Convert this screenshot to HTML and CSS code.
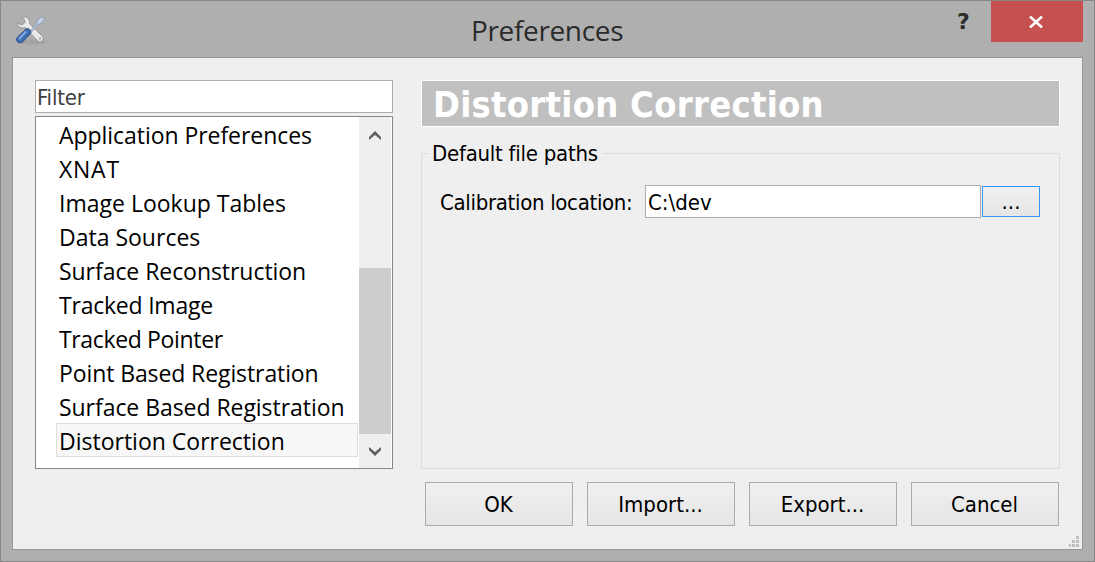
FILE: index.html
```html
<!DOCTYPE html>
<html lang="en">
<head>
<meta charset="utf-8">
<title>Preferences</title>
<link rel="stylesheet" href="styles.css">
</head>
<body>
<div class="window">
  <header class="titlebar">
    <svg class="app-icon" width="34" height="32" viewBox="0 0 34 32">
      <ellipse cx="17" cy="27" rx="14" ry="2.5" fill="#999" opacity=".55"/>
      <path d="M7 2.500C11 .8 15 3.500 14.500 8.500L27.500 21.500C29 23 28 26 25.500 26.500C24 26.800 23 26 22 25L10 12.500C6 14 2.500 11.500 2.500 8L7 10L10 7.500L9.500 4.500Z" fill="#e9e9e9" stroke="#999" stroke-width="1"/>
      <circle cx="25" cy="23.500" r="1.200" fill="#aaa"/>
      <path d="M14 17L22 8L22 5.500L26 2L29 2.500L29 5L25.500 9L23 9.500L15.500 18Z" fill="#bfd0e4" stroke="#8f9fb2" stroke-width="1"/>
      <path d="M11 14C13 12.500 17 15.500 15.500 18.500L7.500 27C5 29 0 26.500 2 23C4 20 7.500 18 11 14Z" fill="#3e6fb5" stroke="#254a86" stroke-width="1"/>
      <path d="M10.500 17L4.500 23.500" stroke="#83abe2" stroke-width="2" stroke-linecap="round"/>
    </svg>
    <h1 class="window-title">Preferences</h1>
    <span class="help">?</span>
    <button class="close" aria-label="Close"><svg width="14" height="12" viewBox="0 0 14 12"><path d="M1 .5L13 11.500M13 .5L1 11.500" stroke="#fff" stroke-width="2.600"/></svg></button>
  </header>
  <main class="client">
    <aside class="sidebar">
      <div class="filter">Filter</div>
      <div class="list">
        <ul class="items">
          <li class="snug">Application Preferences</li>
          <li class="wide">XNAT</li>
          <li>Image Lookup Tables</li>
          <li>Data Sources</li>
          <li class="snug">Surface Reconstruction</li>
          <li class="tight">Tracked Image</li>
          <li class="tighter">Tracked Pointer</li>
          <li class="close-set">Point Based Registration</li>
          <li class="snug">Surface Based Registration</li>
          <li class="selected">Distortion Correction</li>
        </ul>
        <div class="scrollbar">
          <svg class="arrow" width="12" height="9" viewBox="0 0 12 9"><path d="M0 6L6 0L12 6V9L6 4L0 9Z" fill="#606060"/></svg>
          <div class="thumb"></div>
          <svg class="arrow" width="12" height="9" viewBox="0 0 12 9"><path d="M0 3L6 9L12 3V0L6 5L0 0Z" fill="#606060"/></svg>
        </div>
      </div>
    </aside>
    <section class="content">
      <h2 class="heading">Distortion Correction</h2>
      <fieldset class="group">
        <legend>Default file paths</legend>
        <div class="field">
          <span class="label">Calibration location:</span>
          <div class="input">C:\dev</div>
          <button class="browse" aria-label="Browse">...</button>
        </div>
      </fieldset>
      <div class="actions">
        <button>OK</button>
        <button>Import...</button>
        <button>Export...</button>
        <button>Cancel</button>
      </div>
    </section>
    <svg class="grip" width="10" height="11" viewBox="0 0 10 11" fill="#bfbfbf"><path d="M7 0h3v3h-3zM3 4h3v3h-3zM7 4h3v3h-3zM0 8h2v3h-2zM3 8h3v3h-3zM7 8h3v3h-3z"/></svg>
  </main>
</div>
</body>
</html>
```
FILE: styles.css
```css
* { box-sizing: border-box; }
body { margin: 0; overflow: hidden; }
h1, h2, ul { margin: 0; padding: 0; font-weight: 400; }
button { padding: 0; margin: 0; }
.window {
  width: 1095px; height: 562px;
  padding: 0 11px 12px;
  background: #afafaf;
  border: 1px solid #878787;
  font: 22px "DejaVu Sans Condensed", "DejaVu Sans", sans-serif;
  font-stretch: condensed;
  color: #000;
  white-space: nowrap;
}
.titlebar { height: 56px; display: flex; align-items: flex-start; }
.app-icon { margin: 14px 0 0 3px; }
.window-title {
  flex: 1; padding: 9px 0 0 422px;
  font: 28px/40px "Open Sans", "Noto Sans", sans-serif;
  letter-spacing: -0.35px;
  color: #2b2b2b;
}
.help { width: 34px; padding-top: 5px; font: bold 22px/32px "DejaVu Sans", sans-serif; color: #2b2b2b; }
.close {
  width: 92px; height: 41px; border: 0; background: #c75050;
  display: flex; align-items: center; justify-content: center;
  padding-right: 2px;
}
.client {
  position: relative;
  width: 1071px; height: 493px;
  border: 1px solid #969696;
  background: #efefef;
  display: flex; gap: 28px;
  padding: 22px;
}
.sidebar { width: 358px; display: flex; flex-direction: column; gap: 3px; }
.filter {
  height: 33px; border: 1px solid #abadb3; background: #fff;
  padding-left: 1px; line-height: 33px; letter-spacing: -0.2px; color: #404040;
}
.list { height: 353px; border: 1px solid #828790; background: #fff; display: flex; }
.items {
  width: 323px; padding: 1px 1px 0 20px; list-style: none;
  font: 23px/34px "Open Sans", "Noto Sans", sans-serif;
}
.items li { height: 34px; padding-left: 3px; }
.items .wide { letter-spacing: 0.75px; }
.items .snug { letter-spacing: -0.05px; }
.items .close-set { letter-spacing: -0.1px; }
.items .tight { letter-spacing: -0.22px; }
.items .tighter { letter-spacing: -0.35px; }
.items .selected {
  border: 1px solid #dedede; background: #f7f7f7;
  padding-left: 2px; line-height: 35px; margin-top: -1px;
}
.scrollbar {
  width: 32px; background: #efefef;
  display: flex; flex-direction: column; align-items: center;
  padding: 14px 0 12px;
}
.thumb { width: 32px; height: 166px; margin: 128px 0 13px; background: #cdcdcd; }
.arrow { flex: none; }
.content { width: 639px; }
.heading {
  height: 47px; border: 1px solid #fff; background: #c0c0c0;
  padding-left: 11px;
  font: bold 36px/47px "DejaVu Sans Condensed", "DejaVu Sans", sans-serif;
  font-stretch: condensed;
  letter-spacing: 0.27px;
  color: #fff;
}
.group {
  height: 330px; margin: 12px 0 0; padding: 18px 18px 0;
  border: 1px solid #dcdcdc; min-width: 0;
}
.group legend {
  height: 28px; margin-left: -12px; padding: 0 4px;
  line-height: 29px; letter-spacing: -0.25px;
}
.field { display: flex; align-items: flex-start; height: 33px; }
.label { width: 205px; line-height: 35px; letter-spacing: -0.32px; }
.input { width: 336px; height: 33px; border: 1px solid #abadb3; background: #fff; padding-left: 2px; line-height: 33px; }
.browse {
  width: 58px; height: 31px; margin: 1px 0 0 1px;
  border: 1px solid #3399ff; background: linear-gradient(#f0f0f0, #e5e5e5);
  font: inherit; color: inherit;
}
.actions { display: flex; gap: 14px; margin: 13px 0 0 4px; }
.actions button {
  width: 148px; height: 44px; padding-right: 1px;
  border: 1px solid #acacac; background: linear-gradient(#f0f0f0, #e5e5e5);
  font: inherit; color: inherit;
}
.grip { position: absolute; right: 3px; bottom: 2px; }
```
